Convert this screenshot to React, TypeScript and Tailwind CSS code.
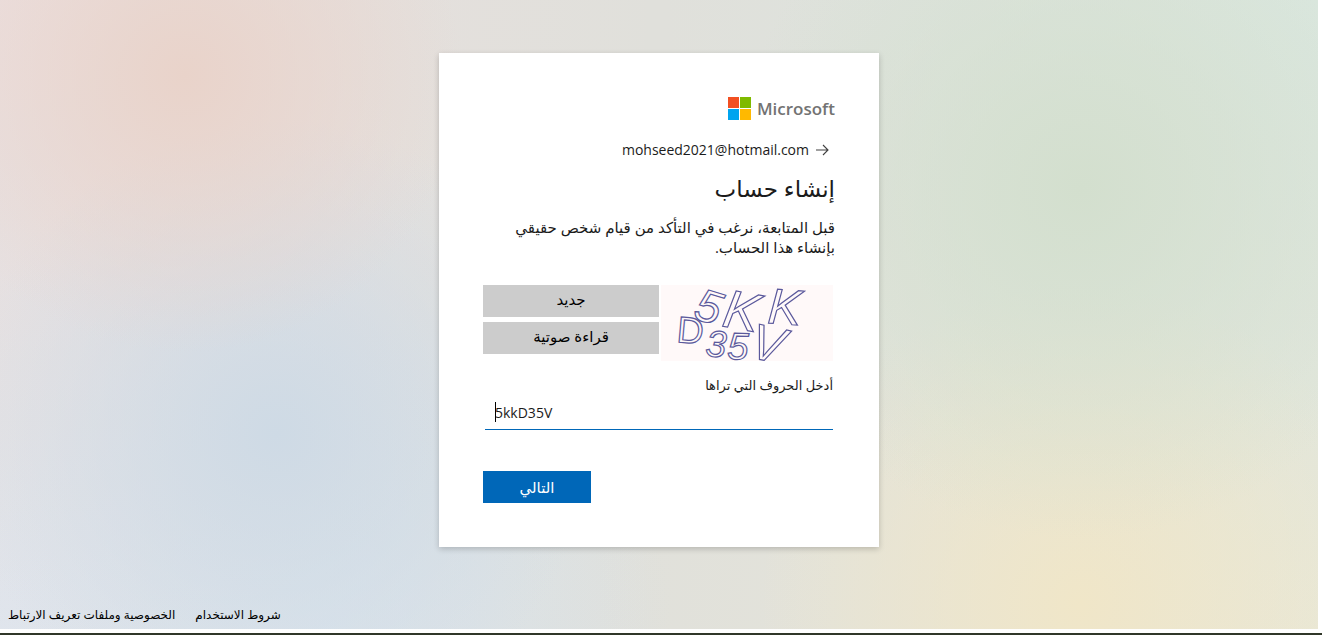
import { useState } from "react";

function MicrosoftLogo() {
  return (
    <div dir="ltr" className="flex h-[23px] items-center gap-1.5 self-start">
      <svg width="23" height="23" viewBox="0 0 23 23" aria-hidden="true">
        <path fill="#f25022" d="M0 0h11v11H0z" />
        <path fill="#7fba00" d="M12 0h11v11H12z" />
        <path fill="#00a4ef" d="M0 12h11v11H0z" />
        <path fill="#ffb900" d="M12 12h11v11H12z" />
      </svg>
      <span className="font-['Open_Sans',sans-serif] text-[17px] leading-[23px] font-semibold text-[#737373]">
        Microsoft
      </span>
    </div>
  );
}

const glyphs = [
  { char: "5", x: 31, y: 33, size: 46, angle: 17, style: "italic" },
  { char: "K", x: 60, y: 41, size: 54, angle: 10, style: "italic" },
  { char: "K", x: 106, y: 38, size: 50, angle: 4, style: "italic" },
  { char: "D", x: 15, y: 57, size: 37, angle: 5, style: "normal" },
  { char: "3", x: 44, y: 71, size: 37, angle: 4, style: "italic" },
  { char: "5", x: 66, y: 74, size: 38, angle: 2, style: "italic" },
  { char: "V", x: 87, y: 72, size: 50, angle: 12, style: "italic" },
];

function Captcha() {
  return (
    <svg
      viewBox="0 0 172 76"
      className="h-[76px] w-[172px] shrink-0 overflow-visible bg-[#fff9f9]"
      role="img"
      aria-label="5KKD35V"
    >
      <g
        fill="none"
        stroke="#5b599c"
        strokeWidth="1.2"
        fontFamily="'Liberation Sans', sans-serif"
        direction="ltr"
      >
        {glyphs.map((g, i) => (
          <text
            key={i}
            fontSize={g.size}
            fontStyle={g.style}
            transform={`translate(${g.x} ${g.y}) rotate(${g.angle})`}
          >
            {g.char}
          </text>
        ))}
      </g>
    </svg>
  );
}

export default function App() {
  const [value, setValue] = useState("5kkD35V");
  return (
    <div
      dir="rtl"
      lang="ar"
      className="flex min-h-screen flex-col bg-white font-['Open_Sans','DejaVu_Sans',sans-serif] text-[#1b1b1b]"
    >
      <div className="mr-1 mb-1 flex grow flex-col bg-[#e0e0db] bg-[radial-gradient(circle_at_14%_12%,#e9d3ca_0%,transparent_22%),radial-gradient(circle_at_21%_69%,#cedae5_0%,transparent_28%),radial-gradient(circle_at_82%_30%,#d3dfce_0%,transparent_30%),radial-gradient(circle_at_82%_96%,#f0e6c8_0%,transparent_26%),radial-gradient(circle_at_0%_0%,#ebdfdf_0%,transparent_45%),radial-gradient(circle_at_0%_100%,#dfe5ed_0%,transparent_45%),radial-gradient(circle_at_24%_100%,#d6e2ea_0%,transparent_30%),radial-gradient(circle_at_100%_0%,#dae7df_0%,transparent_45%),radial-gradient(circle_at_100%_100%,#e9e8d8_0%,transparent_50%)]">
        <main className="flex grow items-center justify-center pb-px">
          <section className="flex w-full max-w-[440px] flex-col bg-white p-11 shadow-[0_2px_6px_rgba(0,0,0,0.2)]">
            <MicrosoftLogo />
            <div className="mt-[18px] flex h-6 items-center gap-1.5 text-sm">
              <button type="button" aria-label="رجوع" className="flex h-6 w-5 items-center justify-end">
                <svg width="14" height="14" viewBox="0 0 14 14" fill="none" stroke="#404040" strokeWidth="1.1">
                  <path d="M1 7h12M8 2l5 5-5 5" />
                </svg>
              </button>
              <span dir="ltr">mohseed2021@hotmail.com</span>
            </div>
            <h1 className="mt-3 text-[23px] leading-7 font-medium">إنشاء حساب</h1>
            <p className="mt-[15px] text-[15px] leading-5">
              قبل المتابعة، نرغب في التأكد من قيام شخص حقيقي بإنشاء هذا الحساب.
            </p>
            <form onSubmit={(e) => e.preventDefault()}>
              <div className="mt-7 flex gap-0.5 ps-0.5">
                <Captcha />
                <div className="flex grow flex-col gap-[5px] text-[15px]">
                  <button type="button" className="h-8 bg-[#ccc] pb-1 text-black">
                    جديد
                  </button>
                  <button type="button" className="h-8 bg-[#ccc] pb-1 text-black">
                    قراءة صوتية
                  </button>
                </div>
              </div>
              <div className="mt-3 flex flex-col px-0.5">
                <label htmlFor="characters" className="text-[13px] leading-6 font-medium">
                  أدخل الحروف التي تراها
                </label>
                <div dir="ltr" className="relative">
                  <input
                    id="characters"
                    value={value}
                    onChange={(e) => setValue(e.target.value)}
                    className="h-[33px] w-full border-b border-[#0067b8] px-2.5 pb-0.5 text-sm outline-none"
                  />
                  <span className="absolute top-[5px] left-2.5 h-5 w-px bg-black" />
                </div>
              </div>
              <div className="mt-[41px] flex justify-end">
                <button type="submit" className="h-8 w-[108px] bg-[#0067b8] text-[15px] text-white">
                  التالي
                </button>
              </div>
            </form>
          </section>
        </main>
        <footer className="flex h-7 items-center justify-end gap-5 px-2 text-xs text-black">
          <a href="#terms">شروط الاستخدام</a>
          <a href="#privacy">الخصوصية وملفات تعريف الارتباط</a>
        </footer>
      </div>
      <div className="h-0.5 bg-[#303729]" />
    </div>
  );
}
